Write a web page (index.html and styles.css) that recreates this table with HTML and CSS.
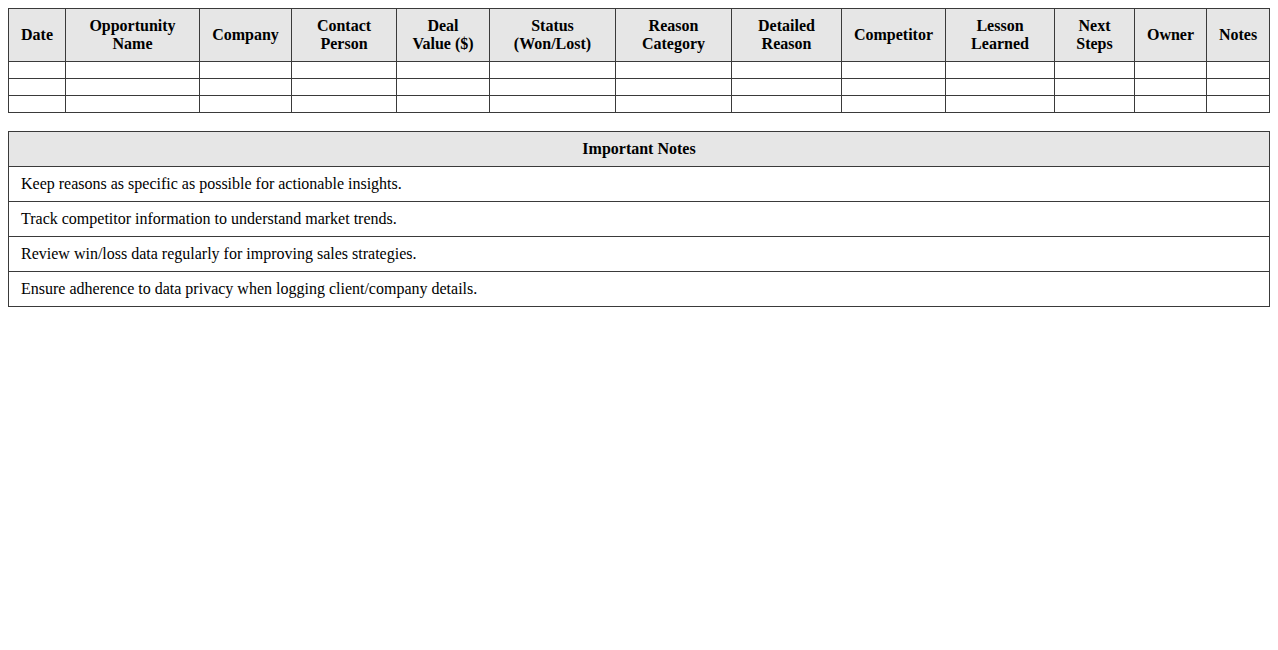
FILE: index.html
```html
<!DOCTYPE html>
<html>
<head>
<meta charset="utf-8">
<title>Win/Loss Log</title>
<link rel="stylesheet" href="styles.css">
</head>
<body>
<table class="log">
  <colgroup>
    <col class="c-date">
    <col class="c-opp">
    <col class="c-company">
    <col class="c-contact">
    <col class="c-deal">
    <col class="c-status">
    <col class="c-reason">
    <col class="c-detail">
    <col class="c-comp">
    <col class="c-lesson">
    <col class="c-next">
    <col class="c-owner">
    <col class="c-notes">
  </colgroup>
  <thead>
    <tr>
      <th>Date</th>
      <th>Opportunity Name</th>
      <th>Company</th>
      <th>Contact Person</th>
      <th>Deal<br>Value ($)</th>
      <th>Status (Won/Lost)</th>
      <th>Reason Category</th>
      <th>Detailed Reason</th>
      <th>Competitor</th>
      <th>Lesson Learned</th>
      <th>Next Steps</th>
      <th>Owner</th>
      <th>Notes</th>
    </tr>
  </thead>
  <tbody>
    <tr><td></td><td></td><td></td><td></td><td></td><td></td><td></td><td></td><td></td><td></td><td></td><td></td><td></td></tr>
    <tr><td></td><td></td><td></td><td></td><td></td><td></td><td></td><td></td><td></td><td></td><td></td><td></td><td></td></tr>
    <tr><td></td><td></td><td></td><td></td><td></td><td></td><td></td><td></td><td></td><td></td><td></td><td></td><td></td></tr>
  </tbody>
</table>

<table class="notes">
  <thead>
    <tr><th>Important Notes</th></tr>
  </thead>
  <tbody>
    <tr><td>Keep reasons as specific as possible for actionable insights.</td></tr>
    <tr><td>Track competitor information to understand market trends.</td></tr>
    <tr><td>Review win/loss data regularly for improving sales strategies.</td></tr>
    <tr><td>Ensure adherence to data privacy when logging client/company details.</td></tr>
  </tbody>
</table>
</body>
</html>
```

FILE: styles.css
```css
body {
  margin: 8px;
  font-family: "Liberation Serif", "Times New Roman", serif;
  font-size: 16px;
  color: #000;
  background: #fff;
}

table {
  width: 100%;
  border-collapse: collapse;
}

.log {
  table-layout: fixed;
}

th, td {
  border: 1px solid #3a3a3a;
  padding: 8px;
}

th {
  background: #e6e6e6;
  font-weight: bold;
  text-align: center;
}

.c-date { width: 57px; }
.c-opp { width: 134px; }
.c-company { width: 92px; }
.c-contact { width: 105px; }
.c-deal { width: 93px; }
.c-status { width: 126px; }
.c-reason { width: 116px; }
.c-detail { width: 110px; }
.c-comp { width: 104px; }
.c-lesson { width: 109px; }
.c-next { width: 80px; }
.c-owner { width: 72px; }

.notes {
  margin-top: 18px;
}

.notes td {
  padding: 8px 12px;
  text-align: left;
}
```
